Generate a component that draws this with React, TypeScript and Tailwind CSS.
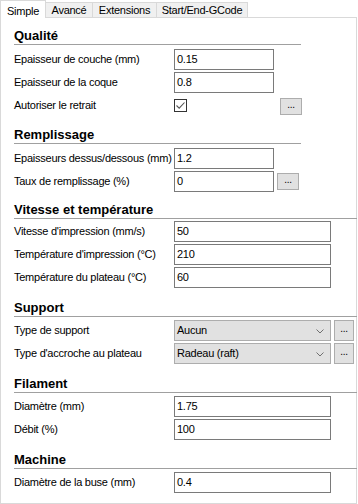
import type { ReactNode } from 'react'

const font = { fontFamily: '"Liberation Sans", Arial, sans-serif' }

function Tab({ label, active, className }: { label: string; active?: boolean; className: string }) {
  if (active) {
    return (
      <div
        className={`relative z-10 h-[18px] flex items-start justify-center pt-[2px] bg-white border-l border-t border-r border-[#d9d9d9] ${className}`}
      >
        {label}
      </div>
    )
  }
  return (
    <div
      className={`mt-[2px] h-[15px] flex items-center justify-center bg-[#f0f0f0] border-t border-r border-[#d9d9d9] ${className}`}
    >
      {label}
    </div>
  )
}

function Section({
  title,
  wide,
  mt,
  gap,
  children,
}: {
  title: string
  wide?: boolean
  mt: string
  gap: string
  children: ReactNode
}) {
  return (
    <section className={`${mt} ${wide ? 'w-[343px]' : 'w-[287px]'}`}>
      <h2 className="h-[17px] leading-[16px] text-[13px] font-bold tracking-[0px] border-b border-[#a0a0a0]">
        {title}
      </h2>
      <div className={`${gap} flex flex-col gap-[2px]`}>{children}</div>
    </section>
  )
}

function Row({ label, children }: { label: string; children: ReactNode }) {
  return (
    <div className="flex items-center h-[21px]">
      <span className="w-[160px] shrink-0 whitespace-nowrap">{label}</span>
      {children}
    </div>
  )
}

function Field({ value, wide }: { value: string; wide?: boolean }) {
  return (
    <div
      className={`h-[21px] ${wide ? 'w-[157px]' : 'w-[100px]'} border border-[#7a7a7a] bg-white pl-[2px] flex items-center text-black`}
    >
      {value}
    </div>
  )
}

function Dots({ small }: { small?: boolean }) {
  return (
    <div
      className={`${small ? 'ml-[3px] w-[22px] h-[17px]' : 'ml-[3px] w-[20px] h-[21px]'} bg-[#e1e1e1] border border-[#adadad] flex items-center justify-center text-[10px] leading-none pb-[3px]`}
    >
      ...
    </div>
  )
}

function Combo({ value }: { value: string }) {
  return (
    <div className="h-[21px] w-[157px] bg-[#e1e1e1] border border-[#adadad] pl-[2px] pr-[6px] flex items-center justify-between">
      <span>{value}</span>
      <svg width="8" height="5" viewBox="0 0 8 5" className="mt-[1px]">
        <path d="M0.5 0.5 L4 4 L7.5 0.5" fill="none" stroke="#707070" strokeWidth="1" />
      </svg>
    </div>
  )
}

export default function App() {
  return (
    <div
      className="w-[358px] h-[504px] bg-white text-[11px] tracking-[-0.25px] text-black overflow-hidden"
      style={font}
    >
      <div className="flex h-[17px] items-start">
        <Tab label="Simple" active className="w-[46px]" />
        <Tab label="Avancé" className="w-[47px]" />
        <Tab label="Extensions" className="w-[64px]" />
        <Tab label="Start/End-GCode" className="w-[91px]" />
      </div>
      <div className="w-[357px] h-[487px] border border-[#d9d9d9] pl-[13px] pt-[10px]">
        <Section title="Qualité" mt="mt-0" gap="mt-[4px]">
          <Row label="Epaisseur de couche (mm)">
            <Field value="0.15" />
          </Row>
          <Row label="Epaisseur de la coque">
            <Field value="0.8" />
          </Row>
          <Row label="Autoriser le retrait">
            <div className="w-[13px] h-[13px] border border-[#333333] bg-white flex items-center justify-center">
              <svg width="11" height="11" viewBox="0 0 11 11">
                <path d="M1.5 5.5 L4.2 8.2 L9.5 2.5" fill="none" stroke="#555555" strokeWidth="1.1" />
              </svg>
            </div>
            <div className="ml-[90px] mt-[1px]">
              <Dots small />
            </div>
          </Row>
        </Section>

        <Section title="Remplissage" mt="mt-[11px]" gap="mt-[4px]">
          <Row label="Epaisseurs dessus/dessous (mm)">
            <Field value="1.2" />
          </Row>
          <Row label="Taux de remplissage (%)">
            <Field value="0" />
            <Dots small />
          </Row>
        </Section>

        <Section title="Vitesse et température" wide mt="mt-[10px]" gap="mt-[2px]">
          <Row label="Vitesse d'impression (mm/s)">
            <Field value="50" wide />
          </Row>
          <Row label="Température d'impression (°C)">
            <Field value="210" wide />
          </Row>
          <Row label="Température du plateau (°C)">
            <Field value="60" wide />
          </Row>
        </Section>

        <Section title="Support" wide mt="mt-[12px]" gap="mt-[3px]">
          <Row label="Type de support">
            <Combo value="Aucun" />
            <Dots />
          </Row>
          <Row label="Type d'accroche au plateau">
            <Combo value="Radeau (raft)" />
            <Dots />
          </Row>
        </Section>

        <Section title="Filament" wide mt="mt-[12px]" gap="mt-[3px]">
          <Row label="Diamètre (mm)">
            <Field value="1.75" wide />
          </Row>
          <Row label="Débit (%)">
            <Field value="100" wide />
          </Row>
        </Section>

        <Section title="Machine" wide mt="mt-[12px]" gap="mt-[3px]">
          <Row label="Diamètre de la buse (mm)">
            <Field value="0.4" wide />
          </Row>
        </Section>
      </div>
    </div>
  )
}
